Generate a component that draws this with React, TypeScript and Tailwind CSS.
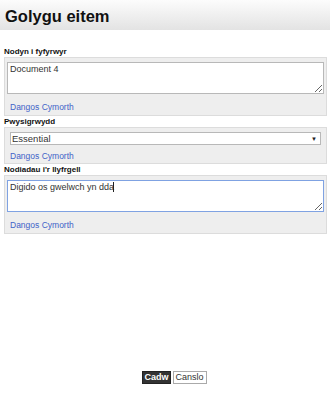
type Field = {
  label: string;
  kind: "textarea" | "select";
  value: string;
  focused?: boolean;
};

const fields: Field[] = [
  { label: "Nodyn i fyfyrwyr", kind: "textarea", value: "Document 4" },
  { label: "Pwysigrwydd", kind: "select", value: "Essential" },
  { label: "Nodiadau i'r llyfrgell", kind: "textarea", value: "Digido os gwelwch yn dda", focused: true },
];

function HelpLink({ compact }: { compact?: boolean }) {
  return (
    <div className={compact ? "h-[18px] pt-[7px] pl-[3px]" : "h-[21px] pt-[9px] pl-[3px]"}>
      <a href="#" className="block text-[8.5px] leading-[8px] text-[#3f63c8] no-underline">
        Dangos Cymorth
      </a>
    </div>
  );
}

function FieldBox({ field }: { field: Field }) {
  return (
    <div>
      <div className="text-[8px] font-bold leading-[11px] text-[#111] pl-[4px] h-[11px]">
        {field.label}
      </div>
      <div className="ml-[4px] mr-[3px] bg-[#eeeeee] border border-[#dcdcdc] px-[2px] pt-[4px]">
        {field.kind === "textarea" ? (
          <div className="relative">
            <textarea
              defaultValue={field.value}
              className={
                "block w-full h-[32px] bg-white text-[9px] leading-[11px] text-[#333] px-[2px] py-[1px] outline-none border " +
                (field.focused ? "border-[#7fa2e2]" : "border-[#b8b8b8]")
              }
            />
            {/* caret of the focused field */}
            {field.focused && <span className="absolute left-[106px] top-[2px] w-px h-[10px] bg-[#222]" />}
          </div>
        ) : (
          <div className="relative mx-[3px] h-[13px] bg-white border border-[#b8b8b8] flex items-center pl-[1px]">
            <span className="text-[9.5px] leading-none text-[#333]">{field.value}</span>
            <span className="absolute right-[3px] top-[3px] text-[6px] leading-none text-[#222]">▼</span>
          </div>
        )}
        <HelpLink compact={field.kind === "select"} />
      </div>
    </div>
  );
}

export default function App() {
  return (
    <div className="w-[330px] h-[400px] bg-white font-['Liberation_Sans',Arial,sans-serif] flex flex-col">
      <div className="h-[30px] bg-gradient-to-b from-[#fcfcfc] to-[#e3e3e3] flex items-center pl-[5px] pt-[3px]">
        <h1 className="text-[16.5px] font-bold text-[#111] leading-none">Golygu eitem</h1>
      </div>

      <div className="mt-[16px] flex flex-col">
        {fields.map((f) => (
          <FieldBox key={f.label} field={f} />
        ))}
      </div>

      <div className="mt-auto mb-[16px] flex justify-center pl-[19px] gap-[2px]">
        <button className="h-[13px] px-[1px] bg-[#333] text-white text-[9px] font-bold leading-none border border-[#222]">
          Cadw
        </button>
        <button className="h-[13px] px-[2px] bg-white text-[#333] text-[9px] leading-none border border-[#aaa]">
          Canslo
        </button>
      </div>
    </div>
  );
}
